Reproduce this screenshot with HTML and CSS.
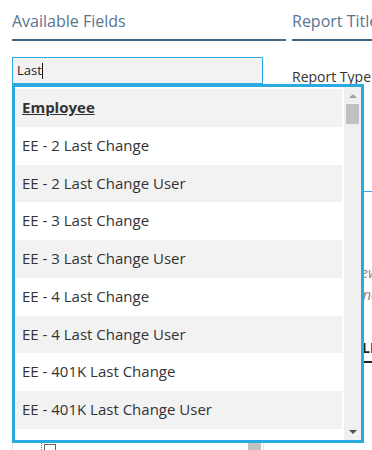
FILE: index.html
```html
<!DOCTYPE html>
<html lang="en">
<head>
  <meta charset="UTF-8">
  <meta name="viewport" content="width=device-width, initial-scale=1.0">
  <title>Report Builder</title>
  <link rel="stylesheet" href="styles.css">
</head>
<body>
  <div class="layout">
    <div class="col-left">
      <h2 class="section-title">Available Fields</h2>

      <div class="search-wrap">
        <div class="search">Last<span class="caret"></span></div>

        <!-- autocomplete results -->
        <div class="dropdown">
          <ul class="results">
            <li class="result group">Employee</li>
            <li class="result">EE - 2 Last Change</li>
            <li class="result">EE - 2 Last Change User</li>
            <li class="result">EE - 3 Last Change</li>
            <li class="result">EE - 3 Last Change User</li>
            <li class="result">EE - 4 Last Change</li>
            <li class="result">EE - 4 Last Change User</li>
            <li class="result">EE - 401K Last Change</li>
            <li class="result">EE - 401K Last Change User</li>
            <li class="result">EE - 403B Last Change</li>
          </ul>
          <div class="scrollbar">
            <div class="scroll-btn up"></div>
            <div class="scroll-track"><div class="scroll-thumb"></div></div>
            <div class="scroll-btn down"></div>
          </div>
        </div>
      </div>

      <div class="tree-panel">
        <div class="tree">
          <div class="tree-group">Employee</div>
          <ul class="tree-children">
            <li class="tree-item"><span class="check"></span><span class="tree-label">Address 1</span></li>
            <li class="tree-item"><span class="check"></span><span class="tree-label">Address 2</span></li>
            <li class="tree-item"><span class="check"></span><span class="tree-label">Birth Date</span></li>
            <li class="tree-item"><span class="check"></span><span class="tree-label">City</span></li>
            <li class="tree-item"><span class="check"></span><span class="tree-label">Department</span></li>
            <li class="tree-item"><span class="check"></span><span class="tree-label">Division</span></li>
            <li class="tree-item"><span class="check"></span><span class="tree-label">Email</span></li>
            <li class="tree-item"><span class="check"></span><span class="tree-label">Employee Code</span></li>
            <li class="tree-item"><span class="check"></span><span class="tree-label">First Name</span></li>
            <li class="tree-item"><span class="check"></span><span class="tree-label">Hire Date</span></li>
            <li class="tree-item"><span class="check"></span><span class="tree-label">Job Title</span></li>
            <li class="tree-item"><span class="check"></span><span class="tree-label">Last Name</span></li>
            <li class="tree-item"><span class="check"></span><span class="tree-label">Location</span></li>
            <li class="tree-item"><span class="check"></span><span class="tree-label">Middle Name</span></li>
          </ul>
        </div>
        <div class="panel-scroll"><div class="panel-thumb"></div></div>
      </div>
    </div>

    <div class="col-right">
      <h2 class="section-title">Report Title</h2>
      <label class="field-label">Report Type</label>
      <div class="type-box"></div>
      <p class="hint">
        <span class="hint-line one">Preview the report</span>
        <span class="hint-line two">once saved</span>
      </p>
      <div class="tabs">
        <span class="tab active">LIST</span>
      </div>
    </div>
  </div>
</body>
</html>
```

FILE: styles.css
```css
html, body {
  margin: 0;
  padding: 0;
}
body {
  font-family: "Open Sans", Arial, sans-serif;
  color: #333;
  background: #fff;
  width: 372px;
  height: 450px;
  overflow: hidden;
}
.layout {
  display: grid;
  grid-template-columns: 274px 220px;
  column-gap: 6px;
  padding: 0 12px;
}
.section-title {
  margin: 0;
  padding-top: 10px;
  font-size: 16px;
  font-weight: normal;
  line-height: 22px;
  color: #587591;
  padding-bottom: 7px;
  border-bottom: 2px solid #3f6887;
  white-space: nowrap;
}

/* search + autocomplete */
.search-wrap {
  position: relative;
  margin-top: 16px;
  width: 251px;
}
.search {
  height: 25px;
  border: 1px solid #29abe2;
  background: #f2f2f2;
  padding-left: 4px;
  font-size: 13px;
  line-height: 25px;
  color: #222;
}
.caret {
  display: inline-block;
  width: 1px;
  height: 16px;
  background: #111;
  vertical-align: -4px;
}
.dropdown {
  position: absolute;
  top: 27px;
  left: 0;
  width: 346px;
  height: 353px;
  border: 3px solid #29abe2;
  background: #fff;
  display: flex;
  z-index: 2;
}
.results {
  list-style: none;
  margin: 0;
  padding: 2px 2px 0 1px;
  flex: 1;
  overflow: hidden;
}
.result {
  padding: 9px 6px;
  font-size: 15px;
  line-height: 19.75px;
  white-space: nowrap;
}
.result:nth-child(odd) {
  background: #f2f2f2;
}
.result.group {
  font-weight: bold;
  text-decoration: underline;
}
.scrollbar {
  width: 17px;
  background: #f0f0f0;
  display: flex;
  flex-direction: column;
}
.scroll-btn {
  height: 17px;
  display: flex;
  align-items: center;
  justify-content: center;
}
.scroll-btn.up::before {
  content: "";
  border-left: 4px solid transparent;
  border-right: 4px solid transparent;
  border-bottom: 4px solid #a3a3a3;
}
.scroll-btn.down::before {
  content: "";
  border-left: 4px solid transparent;
  border-right: 4px solid transparent;
  border-top: 4px solid #505050;
}
.scroll-track {
  flex: 1;
  padding: 0 2px;
}
.scroll-thumb {
  height: 20px;
  background: #c1c1c1;
}

/* field tree (mostly under the dropdown) */
.tree-panel {
  margin-top: 6px;
  width: 250px;
  height: 420px;
  border: 1px solid #e3e3e3;
  display: flex;
}
.tree {
  flex: 1;
  padding-top: 11px;
  font-size: 13px;
}
.tree-group {
  padding-left: 14px;
  line-height: 24px;
  font-weight: bold;
}
.tree-children {
  list-style: none;
  margin: 0 0 0 28px;
  padding: 0 0 0 2px;
  border-left: 1px dotted #777;
}
.tree-item {
  display: flex;
  align-items: flex-start;
  gap: 6px;
  height: 24px;
}
.check {
  width: 10px;
  height: 10px;
  margin-top: 6px;
  border: 1px solid #666;
  background: #fff;
}
.tree-label {
  padding-top: 10px;
  line-height: 18px;
}
.panel-scroll {
  width: 16px;
  padding-top: 330px;
}
.panel-thumb {
  width: 13px;
  margin-left: 1px;
  height: 200px;
  background: #c1c1c1;
}

/* right column */
.field-label {
  display: block;
  margin-top: 27px;
  font-size: 14px;
  line-height: 18px;
  white-space: nowrap;
}
.type-box {
  height: 99px;
  margin-top: 6px;
  border-bottom: 1px solid #29abe2;
}
.hint {
  margin: 69px 0 0;
  font-size: 15px;
  font-style: italic;
  color: #888;
  line-height: 22px;
  white-space: nowrap;
}
.hint-line {
  display: block;
}
.hint-line.one {
  padding-left: 36px;
}
.hint-line.two {
  padding-left: 62px;
}
.tabs {
  margin-top: 33px;
  padding-left: 70px;
  font-size: 14px;
  font-weight: bold;
  color: #222;
}
.tab.active {
  display: inline-block;
  padding-bottom: 4px;
  border-bottom: 2px solid #222;
}
```
